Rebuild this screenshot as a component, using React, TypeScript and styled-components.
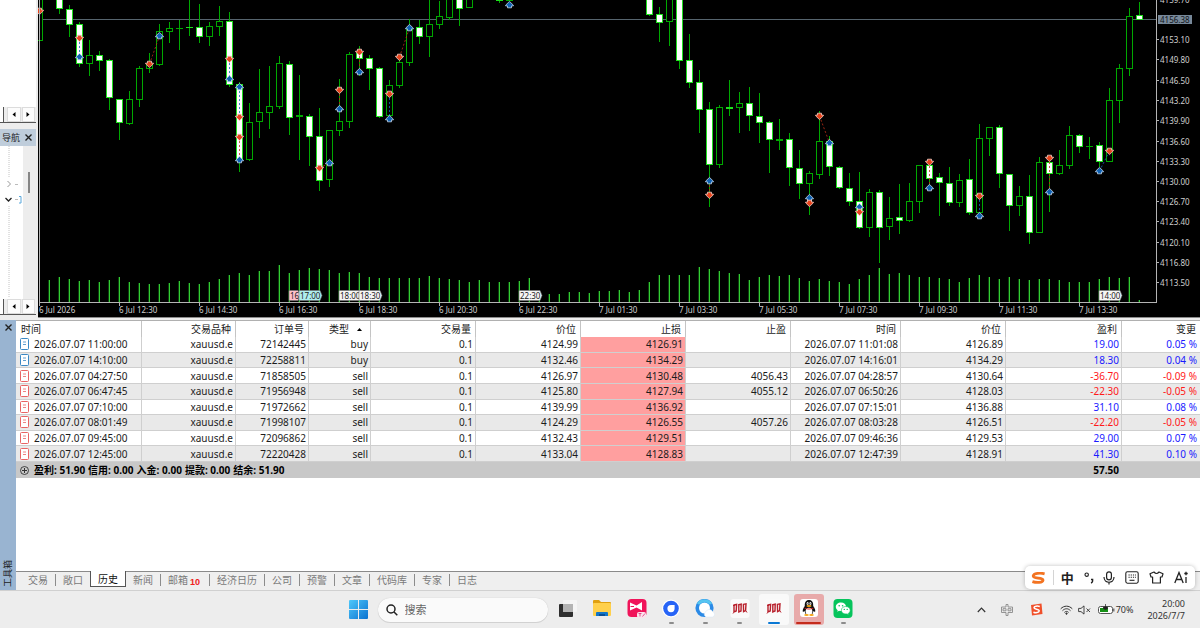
import React from 'react';
import styled, { createGlobalStyle } from 'styled-components';

type Candle = {
  high: number;
  top: number;
  bottom: number;
  low: number;
  down: boolean;
};

type Side = 'buy' | 'sell';

type Deal = {
  openTime: string;
  order: string;
  side: Side;
  openPrice: string;
  stopLoss: string;
  takeProfit: string;
  closeTime: string;
  closePrice: string;
  profit: string;
  change: string;
};

const UI_FONT = "'Noto Sans', 'Noto Sans CJK SC', sans-serif";

const STEP = 10;
const FIRST_X = 39;
const AXIS_Y = 302;

// slot, high, body top, body bottom, low, 1 = bearish
const CANDLE_DATA = [
  [0, -5, -5, 41, 41, 0],
  [2, -5, -5, 9, 14, 1],
  [3, 5, 9, 25, 37, 1],
  [4, 22, 24, 64, 67, 1],
  [5, 40, 55, 64, 76, 0],
  [6, 51, 55, 61, 71, 1],
  [7, 59, 60, 98, 110, 1],
  [8, 99, 99, 123, 140, 1],
  [9, 91, 99, 124, 125, 0],
  [10, 66, 68, 100, 107, 0],
  [11, 53, 64, 69, 73, 0],
  [12, 24, 31, 65, 66, 0],
  [13, 22, 28, 32, 43, 0],
  [14, 20, 28, 29, 50, 0],
  [15, -5, 27, 28, 36, 1],
  [16, 4, 27, 37, 43, 1],
  [17, 22, 26, 37, 46, 0],
  [18, 6, 21, 27, 36, 0],
  [19, 12, 21, 85, 87, 1],
  [20, 82, 84, 160, 172, 1],
  [21, 103, 122, 160, 161, 0],
  [22, 69, 112, 122, 138, 0],
  [23, 66, 106, 113, 129, 0],
  [24, 56, 63, 107, 109, 0],
  [25, 61, 64, 118, 135, 1],
  [26, 75, 115, 117, 160, 0],
  [27, 114, 116, 137, 166, 1],
  [28, 108, 136, 181, 191, 1],
  [29, 130, 130, 180, 187, 0],
  [30, 79, 121, 131, 136, 0],
  [31, 52, 54, 122, 128, 0],
  [32, 46, 53, 59, 76, 1],
  [33, 55, 58, 69, 90, 1],
  [34, 67, 68, 117, 118, 1],
  [35, 80, 85, 116, 116, 0],
  [36, 56, 62, 86, 88, 0],
  [37, 19, 28, 63, 66, 0],
  [38, 20, 27, 37, 44, 1],
  [39, -5, 24, 37, 57, 0],
  [40, 1, 16, 25, 29, 0],
  [41, -5, -5, 18, 20, 0],
  [42, -5, -5, 9, 26, 1],
  [43, -5, -5, 8, 8, 0],
  [46, -5, -5, 1, 3, 1],
  [47, -5, -5, 1, 1, 0],
  [61, -5, -5, 15, 16, 1],
  [62, 7, 14, 23, 42, 1],
  [63, -5, -5, 22, 46, 0],
  [64, -5, -5, 61, 69, 1],
  [65, 34, 60, 83, 88, 1],
  [66, 70, 82, 110, 133, 1],
  [67, 102, 109, 165, 207, 1],
  [68, 105, 107, 165, 168, 0],
  [69, 80, 107, 109, 116, 1],
  [70, 92, 103, 108, 133, 0],
  [71, 87, 103, 116, 131, 1],
  [72, 93, 116, 123, 143, 1],
  [73, 121, 122, 140, 173, 1],
  [74, 119, 139, 141, 150, 0],
  [75, 133, 139, 168, 186, 1],
  [76, 150, 168, 184, 199, 1],
  [77, 171, 173, 184, 215, 0],
  [78, 111, 141, 175, 179, 0],
  [79, 136, 141, 167, 176, 1],
  [80, 166, 167, 188, 189, 1],
  [81, 173, 188, 202, 206, 1],
  [82, 172, 201, 228, 229, 1],
  [83, 189, 192, 228, 237, 0],
  [84, 190, 192, 228, 263, 1],
  [85, 197, 218, 227, 240, 0],
  [86, 184, 217, 221, 234, 1],
  [87, 183, 201, 221, 222, 0],
  [88, 165, 165, 202, 213, 0],
  [89, 160, 165, 179, 187, 1],
  [90, 173, 177, 183, 216, 1],
  [91, 167, 183, 203, 206, 1],
  [92, 174, 180, 203, 207, 0],
  [93, 159, 179, 213, 215, 1],
  [94, 124, 138, 213, 213, 0],
  [95, 127, 127, 139, 156, 0],
  [96, 125, 127, 174, 188, 1],
  [97, 174, 174, 206, 231, 1],
  [98, 186, 196, 206, 216, 0],
  [99, 175, 196, 233, 244, 1],
  [100, 157, 162, 233, 233, 0],
  [101, 160, 162, 174, 212, 1],
  [102, 150, 165, 174, 175, 0],
  [103, 126, 135, 166, 169, 0],
  [104, 134, 135, 147, 153, 1],
  [105, 137, 146, 147, 159, 0],
  [106, 142, 145, 162, 167, 1],
  [107, 88, 100, 162, 162, 0],
  [108, 64, 68, 101, 123, 0],
  [109, 8, 16, 69, 76, 0],
  [110, 2, 15, 20, 20, 1],
];

// tick volume tops, one per slot from slot 1
const VOLUMES = [
  280, 277, 279, 281, 280, 282, 280, 277, 282, 283, 284, 284, 283, 281, 283, 284, 282, 279, 275,
  273, 275, 271, 271, 265, 273, 270, 268, 269, 270, 273, 272, 273, 277, 278, 278, 278, 278, 278,
  276, 278, 279, 280, 282, 280, 282, 282, 282, 281, 278, 294, 294, 294, 292, 292, 293, 291, 291,
  290, 292, 290, 282, 275, 275, 275, 275, 267, 269, 271, 273, 274, 280, 277, 275, 276, 275, 278,
  281, 279, 281, 282, 284, 279, 275, 268, 274, 273, 275, 277, 277, 278, 279, 282, 278, 275, 277,
  279, 277, 279, 280, 279, 279, 280, 282, 282, 282, 279, 277, 278, 277, 300,
];

const MARKERS: [number, number, Side][] = [
  [39, 11, 'sell'],
  [79, 38, 'sell'],
  [79, 57, 'buy'],
  [149, 64, 'sell'],
  [159, 36, 'buy'],
  [229, 59, 'sell'],
  [229, 79, 'buy'],
  [239, 87, 'buy'],
  [239, 117, 'sell'],
  [239, 137, 'sell'],
  [239, 160, 'buy'],
  [319, 168, 'sell'],
  [329, 163, 'buy'],
  [339, 90, 'sell'],
  [339, 109, 'buy'],
  [359, 52, 'sell'],
  [359, 72, 'buy'],
  [389, 94, 'sell'],
  [389, 119, 'buy'],
  [399, 57, 'sell'],
  [409, 28, 'buy'],
  [509, 5, 'buy'],
  [709, 181, 'buy'],
  [709, 195, 'sell'],
  [809, 198, 'buy'],
  [809, 203, 'sell'],
  [819, 116, 'sell'],
  [829, 143, 'buy'],
  [859, 207, 'buy'],
  [859, 212, 'sell'],
  [929, 162, 'sell'],
  [929, 188, 'buy'],
  [979, 196, 'sell'],
  [979, 216, 'buy'],
  [1049, 158, 'sell'],
  [1049, 192, 'buy'],
  [1099, 171, 'buy'],
  [1109, 151, 'sell'],
];

const LINKS: [number, number, number, number, Side][] = [
  [79, 38, 79, 57, 'buy'],
  [149, 64, 159, 36, 'sell'],
  [229, 59, 229, 79, 'buy'],
  [239, 87, 239, 117, 'buy'],
  [239, 137, 239, 160, 'sell'],
  [319, 168, 329, 163, 'sell'],
  [339, 90, 339, 109, 'sell'],
  [359, 52, 359, 72, 'sell'],
  [389, 94, 389, 119, 'buy'],
  [399, 57, 409, 28, 'sell'],
  [709, 181, 709, 195, 'sell'],
  [819, 116, 829, 143, 'sell'],
  [929, 162, 929, 188, 'sell'],
  [979, 196, 979, 216, 'buy'],
  [1049, 158, 1049, 192, 'sell'],
  [1099, 171, 1109, 151, 'buy'],
];

const TIME_LABELS = [
  '6 Jul 2026',
  '6 Jul 12:30',
  '6 Jul 14:30',
  '6 Jul 16:30',
  '6 Jul 18:30',
  '6 Jul 20:30',
  '6 Jul 22:30',
  '7 Jul 01:30',
  '7 Jul 03:30',
  '7 Jul 05:30',
  '7 Jul 07:30',
  '7 Jul 09:30',
  '7 Jul 11:30',
  '7 Jul 13:30',
];

const PRICE_LABELS: [string, number][] = [
  ['4159.70', -1],
  ['4153.10', 39],
  ['4149.80', 59],
  ['4146.50', 80],
  ['4143.20', 100],
  ['4139.90', 120],
  ['4136.60', 141],
  ['4133.30', 161],
  ['4130.00', 181],
  ['4126.70', 201],
  ['4123.40', 221],
  ['4120.10', 242],
  ['4116.80', 262],
  ['4113.50', 282],
];

const EVENTS: [number, string, string][] = [
  [289, '16', '#ffc0cb'],
  [299, '17:00', '#afeeee'],
  [339, '18:00', '#f5f5f5'],
  [359, '18:30', '#f5f5f5'],
  [519, '22:30', '#f5f5f5'],
  [1099, '14:00', '#f5f5f5'],
];

const DEALS: Deal[] = [
  { openTime: '2026.07.07 11:00:00', order: '72142445', side: 'buy', openPrice: '4124.99', stopLoss: '4126.91', takeProfit: '', closeTime: '2026.07.07 11:01:08', closePrice: '4126.89', profit: '19.00', change: '0.05 %' },
  { openTime: '2026.07.07 14:10:00', order: '72258811', side: 'buy', openPrice: '4132.46', stopLoss: '4134.29', takeProfit: '', closeTime: '2026.07.07 14:16:01', closePrice: '4134.29', profit: '18.30', change: '0.04 %' },
  { openTime: '2026.07.07 04:27:50', order: '71858505', side: 'sell', openPrice: '4126.97', stopLoss: '4130.48', takeProfit: '4056.43', closeTime: '2026.07.07 04:28:57', closePrice: '4130.64', profit: '-36.70', change: '-0.09 %' },
  { openTime: '2026.07.07 06:47:45', order: '71956948', side: 'sell', openPrice: '4125.80', stopLoss: '4127.94', takeProfit: '4055.12', closeTime: '2026.07.07 06:50:26', closePrice: '4128.03', profit: '-22.30', change: '-0.05 %' },
  { openTime: '2026.07.07 07:10:00', order: '71972662', side: 'sell', openPrice: '4139.99', stopLoss: '4136.92', takeProfit: '', closeTime: '2026.07.07 07:15:01', closePrice: '4136.88', profit: '31.10', change: '0.08 %' },
  { openTime: '2026.07.07 08:01:49', order: '71998107', side: 'sell', openPrice: '4124.29', stopLoss: '4126.55', takeProfit: '4057.26', closeTime: '2026.07.07 08:03:28', closePrice: '4126.51', profit: '-22.20', change: '-0.05 %' },
  { openTime: '2026.07.07 09:45:00', order: '72096862', side: 'sell', openPrice: '4132.43', stopLoss: '4129.51', takeProfit: '', closeTime: '2026.07.07 09:46:36', closePrice: '4129.53', profit: '29.00', change: '0.07 %' },
  { openTime: '2026.07.07 12:45:00', order: '72220428', side: 'sell', openPrice: '4133.04', stopLoss: '4128.83', takeProfit: '', closeTime: '2026.07.07 12:47:39', closePrice: '4128.91', profit: '41.30', change: '0.10 %' },
];

const COLUMNS: [string, number?][] = [
  ['时间', 126],
  ['交易品种', 94],
  ['订单号', 73],
  ['类型', 62],
  ['交易量', 105],
  ['价位', 105],
  ['止损', 105],
  ['止盈', 105],
  ['时间', 110],
  ['价位', 105],
  ['盈利', 116],
  ['变更'],
];

const SUMMARY = ['盈利: 51.90', '信用: 0.00', '入金: 0.00', '提款: 0.00', '结余: 51.90'];

const TABS = ['交易', '敞口', '历史', '新闻', '邮箱', '经济日历', '公司', '预警', '文章', '代码库', '专家', '日志'];

const GlobalStyle = createGlobalStyle`
  * {
    box-sizing: border-box;
  }

  body {
    margin: 0;
    background: #ededed;
    font-family: ${UI_FONT};
    font-size: 10px;
    line-height: 14px;
    color: #1c1c1c;
  }

  button {
    padding: 0;
    border: 0;
    background: none;
    color: inherit;
    font: inherit;
  }

  svg {
    display: block;
    flex: none;
  }
`;

const Page = styled.div`
  display: flex;
  flex-direction: column;
  min-height: 100vh;
  overflow: hidden;
`;

const Workspace = styled.div`
  display: flex;
  height: 320px;
  padding-bottom: 2px;
  gap: 2px;
`;

const Sidebar = styled.aside`
  display: flex;
  flex-direction: column;
  width: 36px;
  flex: none;
  padding-bottom: 3px;
`;

const WatchPane = styled.div`
  height: 107px;
  background: #fff;
`;

const PagerRow = styled.div`
  display: flex;
  gap: 1px;
  height: 16px;
  padding-right: 1px;
  border-bottom: 1px solid #555;
`;

const PagerTab = styled.div`
  width: 4px;
  margin-right: 2px;
  background: #fff;
  border-right: 1px solid #555;
`;

const PagerButton = styled.button`
  display: flex;
  flex: 1;
  align-items: center;
  justify-content: center;
  background: #fcfcfc;
  border: 1px solid #dcdcdc;
`;

const NavHeader = styled.div`
  display: flex;
  align-items: center;
  justify-content: space-between;
  height: 17px;
  margin-top: 6px;
  padding: 0 4px 0 2px;
  background: #bfcddb;
  font-size: 9px;
  white-space: nowrap;
`;

const NavBody = styled.div`
  display: flex;
  flex: 1;
`;

const NavTree = styled.div`
  width: 23px;
  background: #fff;
`;

const NavScroll = styled.div`
  flex: 1;
  padding: 26px 5px 0;
`;

const NavThumb = styled.div`
  width: 2px;
  height: 21px;
  background: #868686;
`;

const Chart = styled.main`
  display: flex;
  flex: 1;
  min-width: 0;
  background: #000;
  border-bottom: 1px solid #8c8c8c;
`;

const Plot = styled.div`
  display: flex;
  flex: 1;
  justify-content: flex-end;
  min-width: 0;
  overflow: hidden;
`;

const ChartText = styled.text`
  font-family: ${UI_FONT};
  font-size: 8px;
`;

const Toolbox = styled.section`
  display: flex;
  flex: 1;
  border-bottom: 1px solid #d0d0d0;
`;

const ToolboxRail = styled.div`
  display: flex;
  flex-direction: column;
  align-items: center;
  justify-content: space-between;
  width: 16px;
  flex: none;
  padding: 4px 0 3px;
  background: #99b4d1;
`;

const RailTitle = styled.span`
  writing-mode: vertical-rl;
  text-orientation: sideways;
  transform: rotate(180deg);
  font-size: 9px;
  line-height: 12px;
`;

const ToolboxBody = styled.div`
  display: flex;
  flex: 1;
  flex-direction: column;
  min-width: 0;
  background: #fff;
  border-top: 1px solid #b0b0b0;
`;

const DealsTable = styled.table`
  width: 100%;
  height: 157px;
  table-layout: fixed;
  border-spacing: 0;
  text-align: right;
  line-height: 12px;
  white-space: nowrap;
`;

const Th = styled.th`
  height: 16px;
  padding: 0 4px 0 5px;
  border-right: 1px solid #c4c4c4;
  font-weight: normal;
  text-align: right;

  &:first-child {
    text-align: left;
  }

  &:last-child {
    border-right: 0;
  }
`;

const SortButton = styled.button`
  display: inline-flex;
  align-items: center;
  gap: 8px;
  padding-right: 4px;
`;

const Tr = styled.tr`
  background: #fff;

  &:nth-child(even) {
    background: #e9e9e9;
  }
`;

const Td = styled.td<{ $tone?: 'gain' | 'loss' | 'hit' }>`
  padding: 0 2px 0 4px;
  border-right: 1px solid #cfcfcf;
  border-bottom: 1px solid #cfcfcf;
  color: ${({ $tone }) => ($tone === 'gain' ? '#1a1aff' : $tone === 'loss' ? '#ff1a1a' : 'inherit')};
  background: ${({ $tone }) => ($tone === 'hit' ? '#ff9f9f' : 'transparent')};

  &:last-child {
    padding-right: 3px;
    border-right: 0;
  }
`;

const IconLine = styled.div<{ $gap?: number }>`
  display: flex;
  align-items: center;
  gap: ${({ $gap = 5 }) => $gap}px;
`;

const SummaryCell = styled.td`
  height: 16px;
  padding: 0 3px 0 4px;
  background: #c8c8c8;
  color: #000;
  font-weight: bold;
`;

const TabBar = styled.nav`
  display: flex;
  align-items: flex-start;
  height: 19px;
  margin-top: auto;
  padding-left: 5px;
  background: #efefef;
  border-top: 1px solid #8a8a8a;
`;

const Tab = styled.button<{ $active: boolean }>`
  display: flex;
  height: ${({ $active }) => ($active ? 16 : 15)}px;
  margin-top: ${({ $active }) => ($active ? -1 : 0)}px;
  margin-left: ${({ $active }) => ($active ? -1 : 0)}px;
  padding: 0 7px;
  align-items: center;
  background: ${({ $active }) => ($active ? '#fff' : 'none')};
  border: solid #555;
  border-width: ${({ $active }) => ($active ? '0 1px 1px' : '0')};
  color: ${({ $active }) => ($active ? '#111' : '#7a7a7a')};
`;

const TabDivider = styled.span`
  width: 1px;
  height: 12px;
  margin-top: 2px;
  background: #8c8c8c;
`;

const MailCount = styled.span`
  padding: 4px 2px 0 2px;
  color: #f02020;
  font: bold 9px/10px 'Liberation Sans', sans-serif;
`;

const Taskbar = styled.footer`
  display: grid;
  grid-template-columns: 1fr auto 1fr;
  align-items: center;
  height: 37px;
  background: #ededed;
`;

const TaskbarCenter = styled.div`
  grid-column: 2;
  display: flex;
  align-items: center;
  padding-left: 9px;
`;

const SearchBox = styled.label`
  display: flex;
  align-items: center;
  gap: 7px;
  width: 170px;
  height: 24px;
  margin: 0 3px 0 10px;
  padding: 0 8px;
  background: #fafafa;
  border-radius: 12px;
  box-shadow: 0 0 1px #bbb, 0 1px 0 #d4d4d4;
`;

const SearchInput = styled.input`
  flex: 1;
  min-width: 0;
  padding: 0;
  border: 0;
  outline: 0;
  background: none;
  font: 11px/16px ${UI_FONT};

  &::placeholder {
    color: #666;
    opacity: 1;
  }
`;

const Apps = styled.div`
  display: grid;
  grid-template-columns: repeat(9, 1fr);
  width: 310px;
  justify-items: center;
`;

const AppButton = styled.button<{ $tile?: string; $bar?: string; $barWidth?: number }>`
  display: flex;
  flex-direction: column;
  align-items: center;
  width: 30px;
  height: 31px;
  padding-top: 5px;
  border-radius: 3px;
  background: ${({ $tile = 'transparent' }) => $tile};

  &::after {
    content: '';
    width: ${({ $barWidth = 5 }) => $barWidth}px;
    height: 2px;
    margin-top: 4px;
    border-radius: 1px;
    background: ${({ $bar = 'transparent' }) => $bar};
  }
`;

const Tray = styled.div`
  display: flex;
  align-items: center;
  justify-content: flex-end;
  padding-right: 15px;
  color: #333;
  font-size: 9px;
`;

const TrayItem = styled.button<{ $gap: number }>`
  display: flex;
  align-items: center;
  margin-right: ${({ $gap }) => $gap}px;
`;

const Clock = styled.div`
  text-align: right;
  line-height: 12px;
`;

const ImeBar = styled.div`
  position: absolute;
  top: 566px;
  right: 5px;
  display: flex;
  align-items: center;
  justify-content: space-between;
  width: 170px;
  height: 23px;
  padding: 0 6px;
  background: #fff;
  border-radius: 5px;
  box-shadow: 0 0 4px rgb(0 0 0 / 25%);
  color: #222;
`;

const ImeDivider = styled.span`
  width: 1px;
  height: 15px;
  margin: 0 -3px;
  background: #d4d4d4;
`;

const ImeMode = styled.button`
  font-size: 13px;
  font-weight: bold;
  line-height: 18px;
`;

const toCandle = (row: number[]): Candle => ({
  high: row[1],
  top: row[2],
  bottom: row[3],
  low: row[4],
  down: row[5] === 1,
});

const CandleShape = ({ x, candle }: { x: number; candle: Candle }) => {
  const { high, top, bottom, low, down } = candle;
  const color = down ? '#1ee01e' : '#00a800';

  return (
    <g shapeRendering="crispEdges">
      <rect x={x} y={high} width={1} height={low - high} fill="#00a800" />
      {bottom - top <= 2 ? (
        <rect x={x - 3} y={top} width={7} height={bottom - top} fill={color} />
      ) : (
        <rect
          x={x - 2.5}
          y={top + 0.5}
          width={6}
          height={bottom - top - 1}
          fill={down ? '#fff' : '#000'}
          stroke={color}
        />
      )}
    </g>
  );
};

const Marker = ({ x, y, side }: { x: number; y: number; side: Side }) => (
  <path
    d="M0 -3.6 L3.9 .2 L3.9 .9 L2 .9 L2 2.8 L-2 2.8 L-2 .9 L-3.9 .9 L-3.9 .2 Z"
    transform={`translate(${x + 0.5} ${y})${side === 'sell' ? ' scale(1 -1)' : ''}`}
    fill={side === 'buy' ? '#0f62b4' : '#e8431c'}
    stroke={side === 'buy' ? '#c4d6e8' : '#f0cfc6'}
    strokeWidth={0.8}
  />
);

const EventTag = ({ x, label, fill }: { x: number; label: string; fill: string }) => {
  const width = label.length > 2 ? 21 : 9;

  return (
    <g>
      <path d={`M${x} 290.5 h${width} l2 5 l-2 5 H${x} Z`} fill={fill} stroke="#777" strokeWidth={0.6} />
      <ChartText x={x + 1} y={299} fill="#222">
        {label}
      </ChartText>
    </g>
  );
};

const PricePlot = () => (
  <svg width={1118} height={317} viewBox="38 0 1118 317">
    {VOLUMES.map((top, i) => (
      <g key={i} shapeRendering="crispEdges">
        <rect x={FIRST_X + STEP * (i + 1)} y={top} width={1} height={AXIS_Y - top} fill="#32cd32" />
        <rect x={FIRST_X + STEP * (i + 1) - 1} y={top} width={1} height={AXIS_Y - top} fill="#0f400f" />
      </g>
    ))}
    <rect x={39} y={19} width={1117} height={1} fill="#56646e" />
    {CANDLE_DATA.map((row) => (
      <CandleShape key={row[0]} x={FIRST_X + STEP * row[0]} candle={toCandle(row)} />
    ))}
    {LINKS.map(([x1, y1, x2, y2, side], i) => (
      <line
        key={i}
        x1={x1 + 0.5}
        y1={y1}
        x2={x2 + 0.5}
        y2={y2}
        stroke={side === 'buy' ? '#1565c0' : '#c03018'}
        strokeWidth={0.8}
        strokeDasharray="2 2"
      />
    ))}
    {MARKERS.map(([x, y, side], i) => (
      <Marker key={i} x={x} y={y} side={side} />
    ))}
    <g fill="#b4b4b4">
      <rect x={39} y={0} width={1} height={AXIS_Y} />
      <rect x={39} y={AXIS_Y} width={1117} height={1} />
      {TIME_LABELS.map((label, i) => (
        <rect key={label} x={FIRST_X + 80 * i} y={AXIS_Y} width={1} height={4} />
      ))}
    </g>
    {TIME_LABELS.map((label, i) => (
      <ChartText key={label} x={FIRST_X + 80 * i} y={313} fill="#d0d0d0">
        {label}
      </ChartText>
    ))}
    {EVENTS.map(([x, label, fill]) => (
      <EventTag key={x} x={x} label={label} fill={fill} />
    ))}
  </svg>
);

const PriceAxis = () => (
  <svg width={44} height={317} viewBox="0 0 44 317">
    <rect x={0} y={0} width={1} height={303} fill="#b4b4b4" />
    {PRICE_LABELS.map(([label, y]) => (
      <g key={label}>
        <rect x={1} y={y} width={2} height={1} fill="#b4b4b4" />
        <ChartText x={4} y={y + 4} fill="#d0d0d0">
          {label}
        </ChartText>
      </g>
    ))}
    <rect x={2} y={15} width={34} height={9} fill="#778899" />
    <ChartText x={4} y={23} fill="#101418">
      4156.38
    </ChartText>
  </svg>
);

const CloseIcon = () => (
  <svg width={7} height={7} viewBox="0 0 7 7" stroke="#222" strokeWidth={1.4}>
    <path d="M.5 .5 6.5 6.5M6.5 .5.5 6.5" />
  </svg>
);

const Pager = () => (
  <PagerRow>
    <PagerTab />
    <PagerButton aria-label="left">
      <svg width={4} height={5} viewBox="0 0 4 5">
        <path d="M3.5 0V5L.5 2.5Z" />
      </svg>
    </PagerButton>
    <PagerButton aria-label="right">
      <svg width={4} height={5} viewBox="0 0 4 5">
        <path d="M.5 0V5L3.5 2.5Z" />
      </svg>
    </PagerButton>
  </PagerRow>
);

const DealIcon = ({ side }: { side: Side }) => (
  <svg width={9} height={12} viewBox="0 0 9 12" fill="none" stroke={side === 'buy' ? '#3a88c4' : '#e86464'}>
    <rect x={0.5} y={0.5} width={8} height={11} rx={1} fill="#fff" />
    <path d="M3 4H6M3 6.5H6" strokeWidth={0.8} />
  </svg>
);

const DealRow = ({ deal }: { deal: Deal }) => {
  const tone = deal.profit.startsWith('-') ? 'loss' : 'gain';

  return (
    <Tr>
      <Td>
        <IconLine>
          <DealIcon side={deal.side} />
          {deal.openTime}
        </IconLine>
      </Td>
      <Td>xauusd.e</Td>
      <Td>{deal.order}</Td>
      <Td>{deal.side}</Td>
      <Td>0.1</Td>
      <Td>{deal.openPrice}</Td>
      <Td $tone="hit">{deal.stopLoss}</Td>
      <Td>{deal.takeProfit}</Td>
      <Td>{deal.closeTime}</Td>
      <Td>{deal.closePrice}</Td>
      <Td $tone={tone}>{deal.profit}</Td>
      <Td $tone={tone}>{deal.change}</Td>
    </Tr>
  );
};

const History = () => (
  <DealsTable>
    <colgroup>
      {COLUMNS.map(([, width], i) => (
        <col key={i} width={width} />
      ))}
    </colgroup>
    <thead>
      <tr>
        {COLUMNS.map(([title], i) => (
          <Th key={i}>
            {title === '类型' ? (
              <SortButton>
                {title}
                <svg width={5} height={3} viewBox="0 0 5 3">
                  <path d="M0 3 2.5 0 5 3Z" />
                </svg>
              </SortButton>
            ) : (
              title
            )}
          </Th>
        ))}
      </tr>
    </thead>
    <tbody>
      {DEALS.map((deal) => (
        <DealRow key={deal.order} deal={deal} />
      ))}
    </tbody>
    <tfoot>
      <tr>
        <SummaryCell colSpan={10}>
          <IconLine>
            <svg width={9} height={9} viewBox="0 0 9 9" fill="none" stroke="#333">
              <circle cx={4.5} cy={4.5} r={4} strokeWidth={0.9} />
              <path d="M4.5 2V7M2 4.5H7" />
            </svg>
            <IconLine $gap={3}>
              {SUMMARY.map((item) => (
                <span key={item}>{item}</span>
              ))}
            </IconLine>
          </IconLine>
        </SummaryCell>
        <SummaryCell>57.50</SummaryCell>
        <SummaryCell />
      </tr>
    </tfoot>
  </DealsTable>
);

const WindowsLogo = () => (
  <svg width={19} height={19} viewBox="0 0 19 19">
    <defs>
      <linearGradient id="win" x1="0" y1="0" x2="1" y2="1" gradientUnits="objectBoundingBox">
        <stop offset="0" stopColor="#4fc8fa" />
        <stop offset="1" stopColor="#0a72d0" />
      </linearGradient>
    </defs>
    <path fill="url(#win)" d="M0 1q0-1 1-1H9V9H0ZM10 0h8q1 0 1 1V9H10ZM0 10H9v9H1q-1 0-1-1ZM10 10h9v8q0 1-1 1H10Z" />
  </svg>
);

const TaskViewIcon = () => (
  <svg width={20} height={19} viewBox="0 0 20 19">
    <rect x={1} y={5} width={14} height={13} rx={1} fill="#2e2e2e" />
    <rect x={5} y={1} width={14} height={12} rx={1} fill="#f6f6f6" opacity={0.82} />
    <rect x={5} y={5} width={10} height={8} fill="#b4b4b4" />
  </svg>
);

const FolderIcon = () => (
  <svg width={20} height={19} viewBox="0 0 20 19">
    <path d="M1 2q0-1 1-1H7l2 2h9q1 0 1 1V9H1Z" fill="#e0a010" />
    <rect x={1} y={4} width={18} height={13} rx={1} fill="#ffd04c" />
    <path d="M4 17V14q0-1 1-1H15q1 0 1 1V17Z" fill="#1276c8" />
    <rect x={7} y={15} width={6} height={2} fill="#0a4f94" />
  </svg>
);

const VideoIcon = () => (
  <svg width={20} height={19} viewBox="0 0 20 19">
    <rect x={0.5} y={0} width={19} height={18} rx={4} fill="#f0145a" />
    <path d="M3 3.5 9.5 6.5 15 3V11.5L9.5 8.5 3 11.5Z" fill="#fff" />
    <path d="M3.5 7.5H7" stroke="#f0145a" />
    <rect x={10} y={13} width={9} height={6} rx={2} fill="#fbe3ec" />
    <path d="M11.5 14.5H14.5M13 14V17.5M15.5 17.5 18 14.5" stroke="#e0307a" fill="none" strokeWidth={0.8} />
  </svg>
);

const QuarkIcon = () => (
  <svg width={20} height={19} viewBox="0 0 20 19">
    <circle cx={10} cy={9.5} r={9} fill="#fff" />
    <circle cx={10} cy={9.5} r={7.8} fill="#2764f6" />
    <path d="M10 6A3.6 3.6 0 1 0 13.6 9.6V6Z" fill="#fff" />
  </svg>
);

const BrowserIcon = () => (
  <svg width={20} height={19} viewBox="0 0 20 19">
    <circle cx={9.5} cy={9} r={7.3} fill="#fff" stroke="#2b8ae6" strokeWidth={3.6} />
    <path d="M3 5A8 8 0 0 1 16 5" fill="none" stroke="#55c4f0" strokeWidth={3} />
    <path d="M11 18a3 3 0 0 1 0-5.4 3.6 3.6 0 0 1 6.6 0A2.8 2.8 0 0 1 17.5 18Z" fill="#fff" stroke="#d6e6f6" strokeWidth={0.5} />
  </svg>
);

const TerminalIcon = () => (
  <svg width={20} height={19} viewBox="0 0 20 19">
    <rect x={0.5} y={0} width={19} height={19} rx={3} fill="#fafafa" />
    <g fill="none" stroke="#b8202c" strokeWidth={1.4}>
      <path d="M4 6 6.6 5.4 6.2 12 4 13Z" />
      <path d="M8.8 5.6 11.2 5.2 11 12 8.8 13Z" />
      <path d="M13.4 5.4 16 4.8 15.6 11.6 13.6 12.6Z" />
      <path d="M3 6.5H5M3.5 13.5 3 14.5M16 12 17 13.5" strokeWidth={1} />
    </g>
  </svg>
);

const PenguinIcon = () => (
  <svg width={20} height={19} viewBox="0 0 20 19">
    <rect x={1} y={0} width={18} height={18} rx={3} fill="#fff" />
    <path d="M10 1C6.8 1 5.6 3.4 5.8 7 4 9.5 3.2 12 4 13L5.5 12 6.8 15.5H13.2L14.5 12 16 13C16.8 12 16 9.5 14.2 7 14.4 3.4 13.2 1 10 1Z" fill="#111" />
    <ellipse cx={10} cy={12.4} rx={3.4} ry={3.6} fill="#fff" />
    <ellipse cx={8.6} cy={4.6} rx={1} ry={1.5} fill="#fff" />
    <ellipse cx={11.4} cy={4.6} rx={1} ry={1.5} fill="#fff" />
    <circle cx={8.8} cy={4.8} r={0.5} />
    <circle cx={11.2} cy={4.8} r={0.5} />
    <ellipse cx={10} cy={7} rx={2.6} ry={0.9} fill="#f6a614" />
    <path d="M5.6 8.4Q10 10.8 14.4 8.4V9.6Q10 11.6 5.6 9.6Z" fill="#e02020" />
    <ellipse cx={7.5} cy={16} rx={2.3} ry={1} fill="#f6a614" />
    <ellipse cx={12.5} cy={16} rx={2.3} ry={1} fill="#f6a614" />
  </svg>
);

const ChatIcon = () => (
  <svg width={20} height={19} viewBox="0 0 20 19">
    <rect x={0.5} y={0} width={19} height={19} rx={4} fill="#06c45c" />
    <path d="M8 3.5C5 3.5 2.8 5.4 2.8 7.8 2.8 9.2 3.5 10.4 4.7 11.2L4.2 12.8 6.1 11.8C9 12.5 13 11 13 7.8 13 5.4 11 3.5 8 3.5Z" fill="#fff" />
    <path d="M12.8 7.5C10.2 7.5 8.3 9.2 8.3 11.3 8.3 13.8 11 15.4 14.1 14.9L15.7 15.8 15.3 14.4C16.5 13.7 17.2 12.6 17.2 11.3 17.2 9.2 15.3 7.5 12.8 7.5Z" fill="#fff" stroke="#06c45c" strokeWidth={0.6} />
    <g fill="#06c45c">
      <circle cx={6.2} cy={6.7} r={0.8} />
      <circle cx={9.6} cy={6.7} r={0.8} />
      <circle cx={11.3} cy={10.4} r={0.7} />
      <circle cx={14.2} cy={10.4} r={0.7} />
    </g>
  </svg>
);

const SogouMark = ({ color }: { color: string }) => (
  <path
    d="M13.6 1.8C9 .6 2.6 1.2 2.2 4 2 6.8 12.4 5.4 12 8.2 11.6 10.8 5.6 11 1.4 9.6"
    fill="none"
    stroke={color}
    strokeWidth={2.8}
  />
);

const TrayArea = () => (
  <Tray>
    <TrayItem $gap={15} aria-label="more">
      <svg width={9} height={6} viewBox="0 0 9 6" fill="none" stroke="#333" strokeWidth={1.2}>
        <path d="M.8 5 4.5 1.2 8.2 5" />
      </svg>
    </TrayItem>
    <TrayItem $gap={17} aria-label="input method">
      <svg width={12} height={12} viewBox="0 0 12 12" fill="none" stroke="#8a8a8a" strokeWidth={0.9}>
        <path d="M5 .5H7V3H11.5V8.5H7V11.5H5V8.5H.5V3H5ZM2 4.7V6.8H5V4.7ZM7 4.7V6.8H10V4.7Z" />
      </svg>
    </TrayItem>
    <TrayItem $gap={17} aria-label="sogou">
      <svg width={13} height={13} viewBox="0 0 13 13">
        <path d="M1 2 11.5 .5 12.5 11 2 12.5Z" fill="#f0502a" />
        <path d="M9.8 3.4C7.5 2.8 4 3 4 4.7 4 6.5 9.4 5.8 9.2 7.9 9 9.9 5.5 10 3.4 9.2" fill="none" stroke="#fff" strokeWidth={1.5} />
      </svg>
    </TrayItem>
    <TrayItem $gap={5} aria-label="wifi">
      <svg width={13} height={10} viewBox="0 0 13 10" fill="none" stroke="#333" strokeWidth={1}>
        <path d="M.7 3.8C4 .3 9 .3 12.3 3.8M2.5 5.7C5 3.1 8 3.1 10.5 5.7M4.4 7.4C5.8 6.1 7.2 6.1 8.6 7.4" />
        <circle cx={6.5} cy={8.6} r={0.7} fill="#333" />
      </svg>
    </TrayItem>
    <TrayItem $gap={7} aria-label="volume">
      <svg width={13} height={10} viewBox="0 0 13 10" fill="none" stroke="#333" strokeWidth={0.9}>
        <path d="M.6 3.4H3L6 .9V9.1L3 6.6H.6ZM8.5 3.5 12 7M12 3.5 8.5 7" />
      </svg>
    </TrayItem>
    <TrayItem $gap={14} aria-label="battery">
      <svg width={18} height={12} viewBox="0 0 18 12">
        <rect x={0.5} y={2.5} width={14} height={7} rx={2} fill="#fff" stroke="#555" />
        <rect x={2} y={4} width={8} height={4} fill="#169016" />
        <path d="M15.8 4.5V7.5" stroke="#555" strokeWidth={1.2} />
        <path d="M7.5 0V3M5.5 3H9.5V4.5Q7.5 6.5 5.5 4.5Z" fill="#222" stroke="#222" strokeWidth={0.7} />
      </svg>
      70%
    </TrayItem>
    <Clock>
      20:00
      <br />
      2026/7/7
    </Clock>
  </Tray>
);

const InputMethodBar = () => (
  <ImeBar>
    <svg width={15} height={12} viewBox="0 0 15 12">
      <SogouMark color="#f37321" />
    </svg>
    <ImeDivider />
    <ImeMode>中</ImeMode>
    <svg width={10} height={12} viewBox="0 0 10 12" fill="none" stroke="#222" strokeWidth={1.1}>
      <circle cx={2.7} cy={2.7} r={1.7} />
      <path d="M7 7.5H8.6V9.2Q8.4 10.5 7 11" strokeWidth={1.4} />
    </svg>
    <svg width={12} height={14} viewBox="0 0 12 14" fill="none" stroke="#222" strokeWidth={1.2}>
      <rect x={3.6} y={0.8} width={4.8} height={8} rx={2.4} />
      <path d="M1 6C1 13 11 13 11 6M6 11.2V13.5" />
    </svg>
    <svg width={14} height={13} viewBox="0 0 14 13" fill="none" stroke="#222" strokeWidth={1.1}>
      <rect x={0.8} y={0.8} width={12.4} height={11.4} rx={1.6} />
      <path d="M3.5 4H11M3.5 6.3H11" strokeDasharray="1.2 1" />
      <path d="M4.5 9.3H9.5" />
    </svg>
    <svg width={15} height={13} viewBox="0 0 15 13" fill="none" stroke="#222" strokeWidth={1.2} strokeLinejoin="round">
      <path d="M5 1 1 2.8 2 6H3.6V12H11.4V6H13L14 2.8 10 1Q7.5 4 5 1Z" />
    </svg>
    <svg width={15} height={13} viewBox="0 0 15 13" fill="none" stroke="#222" strokeWidth={1.3}>
      <path d="M.8 12 5 1.5 9.2 12M2.5 8.5H7.5M12 6V12M12 .8V4.2M10.3 2.5H13.7" />
    </svg>
  </ImeBar>
);

const App = () => {
  return (
    <>
      <GlobalStyle />
      <Page>
        <Workspace>
          <Sidebar>
            <WatchPane />
            <Pager />
            <NavHeader>
              导航
              <CloseIcon />
            </NavHeader>
            <NavBody>
              <NavTree>
                <svg width={23} height={152} viewBox="0 0 23 152" fill="none">
                  <path d="M9 0V152" stroke="#c4c4c4" strokeDasharray="1 1" />
                  <rect x={4} y={32} width={10} height={27} fill="#fff" />
                  <path d="M7.5 35 10.5 38 7.5 41" stroke="#999" />
                  <path d="M5.5 52 8.5 55 11.5 52" stroke="#222" strokeWidth={1.3} />
                  <path d="M15 38.5H18M15 53.5H18" stroke="#bbb" />
                  <path d="M19 50.5H21V57H19" stroke="#5aa8dc" />
                </svg>
              </NavTree>
              <NavScroll>
                <NavThumb />
              </NavScroll>
            </NavBody>
            <Pager />
          </Sidebar>
          <Chart>
            <Plot>
              <PricePlot />
            </Plot>
            <PriceAxis />
          </Chart>
        </Workspace>
        <Toolbox>
          <ToolboxRail>
            <CloseIcon />
            <RailTitle>工具箱</RailTitle>
          </ToolboxRail>
          <ToolboxBody>
            <History />
            <TabBar>
              {TABS.map((tab, i) => (
                <React.Fragment key={tab}>
                  <Tab $active={tab === '历史'}>
                    {tab}
                    {tab === '邮箱' && <MailCount>10</MailCount>}
                  </Tab>
                  {tab !== '历史' && i < TABS.length - 1 && <TabDivider />}
                </React.Fragment>
              ))}
            </TabBar>
          </ToolboxBody>
        </Toolbox>
        <Taskbar>
          <TaskbarCenter>
            <WindowsLogo />
            <SearchBox>
              <svg width={12} height={12} viewBox="0 0 12 12" fill="none" stroke="#222" strokeWidth={1.5}>
                <circle cx={5} cy={5} r={4} />
                <path d="M8 8 11.3 11.3" />
              </svg>
              <SearchInput placeholder="搜索" aria-label="搜索" />
            </SearchBox>
            <Apps>
              <AppButton>
                <TaskViewIcon />
              </AppButton>
              <AppButton>
                <FolderIcon />
              </AppButton>
              <AppButton>
                <VideoIcon />
              </AppButton>
              <AppButton $bar="#8c8c8c">
                <QuarkIcon />
              </AppButton>
              <AppButton $bar="#8c8c8c">
                <BrowserIcon />
              </AppButton>
              <AppButton $bar="#8c8c8c">
                <TerminalIcon />
              </AppButton>
              <AppButton $tile="#f9f9f9" $bar="#0a78d4" $barWidth={12}>
                <TerminalIcon />
              </AppButton>
              <AppButton $tile="#e8aaaa" $bar="#c42b1c" $barWidth={25}>
                <PenguinIcon />
              </AppButton>
              <AppButton $bar="#8c8c8c">
                <ChatIcon />
              </AppButton>
            </Apps>
          </TaskbarCenter>
          <TrayArea />
        </Taskbar>
      </Page>
      <InputMethodBar />
    </>
  );
};

export default App;
